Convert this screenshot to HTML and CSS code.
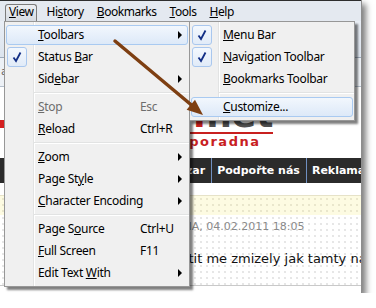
FILE: index.html
```html
<!DOCTYPE html>
<html lang="cs">

<head>
    <meta charset="UTF-8">
    <title>View menu</title>
    <link rel="stylesheet" href="styles.css">
</head>

<body>
    <div class="window">
        <div class="menubar">
            <span class="mb-item open"><u>V</u>iew</span>
            <span class="mb-item">Hi<u>s</u>tory</span>
            <span class="mb-item"><u>B</u>ookmarks</span>
            <span class="mb-item"><u>T</u>ools</span>
            <span class="mb-item"><u>H</u>elp</span>
        </div>

        <div class="page">
            <div class="toolbar"></div>
            <div class="tabs">aktuality</div>
            <div class="site-head">
                <span class="badge"></span>
                <div class="logo">
                    <div class="logo-name">mozilla<span class="dot">.</span>net</div>
                    <div class="logo-tag">internetová poradna</div>
                </div>
            </div>
            <div class="nav">
                <span>Úvod</span>
                <span>Poradna</span>
                <span>Bazar</span>
                <span>Podpořte nás</span>
                <span>Reklama</span>
            </div>
            <div class="notice"></div>
            <div class="post">
                <div class="post-meta">JANA, 04.02.2011 18:05</div>
                <div class="post-text">Jak vrátit me zmizely jak tamty nástroje?</div>
                <div class="post-foot"></div>
            </div>
        </div>

        <!-- View menu -->
        <div class="menu view-menu">
            <div class="item hot">
                <span class="gut"></span><span class="label"><u>T</u>oolbars</span><span class="key"></span><span class="sub-arrow"></span>
            </div>
            <div class="item">
                <span class="gut"><span class="check"><svg width="10" height="12" viewBox="0 0 10 12"><polyline points="1.5,6.5 4,10 8.5,1.5" fill="none" stroke="#132f86" stroke-width="1.8"/></svg></span></span><span class="label">Status <u>B</u>ar</span><span class="key"></span>
            </div>
            <div class="item">
                <span class="gut"></span><span class="label">Sid<u>e</u>bar</span><span class="key"></span><span class="sub-arrow"></span>
            </div>
            <div class="sep"></div>
            <div class="item disabled">
                <span class="gut"></span><span class="label"><u>S</u>top</span><span class="key">Esc</span>
            </div>
            <div class="item">
                <span class="gut"></span><span class="label"><u>R</u>eload</span><span class="key">Ctrl+R</span>
            </div>
            <div class="sep"></div>
            <div class="item">
                <span class="gut"></span><span class="label"><u>Z</u>oom</span><span class="key"></span><span class="sub-arrow"></span>
            </div>
            <div class="item">
                <span class="gut"></span><span class="label">Page St<u>y</u>le</span><span class="key"></span><span class="sub-arrow"></span>
            </div>
            <div class="item">
                <span class="gut"></span><span class="label"><u>C</u>haracter Encoding</span><span class="key"></span><span class="sub-arrow"></span>
            </div>
            <div class="sep"></div>
            <div class="item">
                <span class="gut"></span><span class="label">Page S<u>o</u>urce</span><span class="key">Ctrl+U</span>
            </div>
            <div class="item">
                <span class="gut"></span><span class="label"><u>F</u>ull Screen</span><span class="key">F11</span>
            </div>
            <div class="item">
                <span class="gut"></span><span class="label">Edit Text <u>W</u>ith</span><span class="key"></span><span class="sub-arrow"></span>
            </div>
        </div>

        <!-- Toolbars submenu -->
        <div class="menu sub-menu">
            <div class="item">
                <span class="gut"><span class="check"><svg width="10" height="12" viewBox="0 0 10 12"><polyline points="1.5,6.5 4,10 8.5,1.5" fill="none" stroke="#132f86" stroke-width="1.8"/></svg></span></span><span class="label"><u>M</u>enu Bar</span>
            </div>
            <div class="item">
                <span class="gut"><span class="check"><svg width="10" height="12" viewBox="0 0 10 12"><polyline points="1.5,6.5 4,10 8.5,1.5" fill="none" stroke="#132f86" stroke-width="1.8"/></svg></span></span><span class="label"><u>N</u>avigation Toolbar</span>
            </div>
            <div class="item">
                <span class="gut"></span><span class="label"><u>B</u>ookmarks Toolbar</span>
            </div>
            <div class="sep"></div>
            <div class="item hot">
                <span class="gut"></span><span class="label"><u>C</u>ustomize...</span>
            </div>
        </div>

        <svg class="pointer" width="362" height="293" viewBox="0 0 362 293">
            <line x1="115" y1="41" x2="192" y2="105.5" stroke="#7e3f12" stroke-width="3.5" stroke-linecap="round" />
            <polygon points="186.6,109.7 195,99.7 203,115" fill="#7e3f12" />
        </svg>
    </div>
</body>

</html>
```

FILE: styles.css
```css
body {
    margin: 0;
    background: #fff;
    font-family: "Noto Sans", "DejaVu Sans", sans-serif;
}

.window {
    position: relative;
    width: 361px;
    height: 293px;
    border-right: 1px solid #8d8d8d;
    background: #fff;
    box-shadow: 4px 4px 6px rgba(0, 0, 0, 0.5);
    overflow: hidden;
}

/* menu bar */

.menubar {
    display: flex;
    align-items: flex-end;
    gap: 5px;
    height: 20px;
    padding-left: 5px;
    border-top: 1px solid #2e2e2e;
    background: #e4e9f0;
    font-size: 12px;
    letter-spacing: -0.45px;
}

.mb-item {
    height: 16px;
    padding: 0 3px;
    line-height: 13px;
    border: 1px solid transparent;
    border-bottom: none;
    border-radius: 3px 3px 0 0;
}

.mb-item.open {
    border-color: #7c7c7c;
    background: linear-gradient(#eceff3, #d6dbe2);
}

/* page behind the menus */

.page {
    font-family: "DejaVu Sans", Verdana, sans-serif;
}

.toolbar {
    height: 36px;
    border-bottom: 1px solid #9eabbb;
    background: linear-gradient(#e9eef5, #dce4ee);
}

.tabs {
    height: 28px;
    padding-left: 1px;
    border-bottom: 1px solid #b5c0cd;
    background: #edf1f6;
    color: #666;
    font-size: 11px;
    line-height: 28px;
}

.site-head {
    display: flex;
    align-items: flex-start;
    padding: 10px 0 8px 0;
}

.badge {
    width: 4px;
    height: 8px;
    margin-top: 23px;
    background: #d42020;
}

.logo {
    margin-left: 44px;
}

.logo-name {
    border-bottom: 2px solid #c8201f;
    color: #505050;
    font-size: 36px;
    font-weight: bold;
    line-height: 35px;
}

.logo-name .dot {
    color: #c8201f;
}

.logo-tag {
    padding-right: 13px;
    color: #c8201f;
    font-size: 13px;
    font-weight: bold;
    letter-spacing: 1.5px;
    line-height: 16px;
    text-align: right;
}

.nav {
    display: flex;
    height: 25px;
    padding-left: 58px;
    background: #2b2b2b;
    color: #fff;
    font-size: 11px;
    font-weight: bold;
    line-height: 25px;
    white-space: nowrap;
}

.nav span {
    padding: 0 6px 0 5px;
    border-left: 1px solid #6f8fc0;
}

.nav span:first-child {
    border-left: none;
}

.notice {
    height: 19px;
    margin-top: 12px;
    border-top: 1px solid #e6e2c8;
    background: #fdfbe2 radial-gradient(#e9e6cc 0.7px, transparent 1px) 0 0 / 6px 6px;
}

.post {
    padding-top: 5px;
    background: radial-gradient(#e6e6e6 0.7px, transparent 1px) 0 0 / 6px 6px;
}

.post-meta {
    padding-left: 173px;
    color: #8a8a8a;
    font-size: 11px;
    line-height: 14px;
    white-space: nowrap;
}

.post-text {
    margin-top: 17px;
    padding-left: 144px;
    color: #111;
    font-size: 13px;
    line-height: 16px;
    white-space: nowrap;
}

.post-foot {
    height: 20px;
    margin-top: 18px;
    border-top: 1px solid #c9c9c9;
    background: #fff;
}

/* popup menus */

.menu {
    position: absolute;
    top: 21px;
    display: flex;
    flex-direction: column;
    padding: 2px 0;
    border: 1px solid #979797;
    background: linear-gradient(to right, transparent 28px, #e2e3e3 28px, #e2e3e3 29px, #fff 29px, #fff 30px, transparent 30px), #f0f0f0;
    box-shadow: 3px 3px 2px rgba(0, 0, 0, 0.5);
    font-size: 12px;
    letter-spacing: -0.3px;
}

.view-menu {
    left: 4px;
    width: 184px;
}

.sub-menu {
    left: 189px;
    width: 164px;
}

.item {
    display: flex;
    align-items: center;
    height: 18px;
    margin: 1px;
    border: 1px solid transparent;
    border-radius: 3px;
    line-height: 18px;
    white-space: nowrap;
}

.item.hot {
    border-color: #a9caf1;
    background: linear-gradient(#f2f7fd, #dde9f8);
}

.item.disabled {
    color: #6d6d6d;
}

.gut {
    display: flex;
    align-items: center;
    flex: none;
    width: 31px;
    height: 18px;
}

.check {
    display: flex;
    align-items: center;
    justify-content: center;
    box-sizing: border-box;
    width: 20px;
    height: 20px;
    border: 1px solid #a9c7ee;
    border-radius: 3px;
    background: linear-gradient(#f3f8fe, #e1ebf8);
}

.label {
    flex: none;
    width: 102px;
}

.key {
    flex: 1;
}

.sub-arrow {
    width: 0;
    height: 0;
    margin-right: 5px;
    border-left: 4px solid #000;
    border-top: 4px solid transparent;
    border-bottom: 4px solid transparent;
}

.sep {
    height: 0;
    margin: 2px 0 2px 29px;
    border-top: 1px solid #e2e3e3;
    border-bottom: 1px solid #fff;
}

.pointer {
    position: absolute;
    top: 0;
    left: 0;
    pointer-events: none;
}
```
